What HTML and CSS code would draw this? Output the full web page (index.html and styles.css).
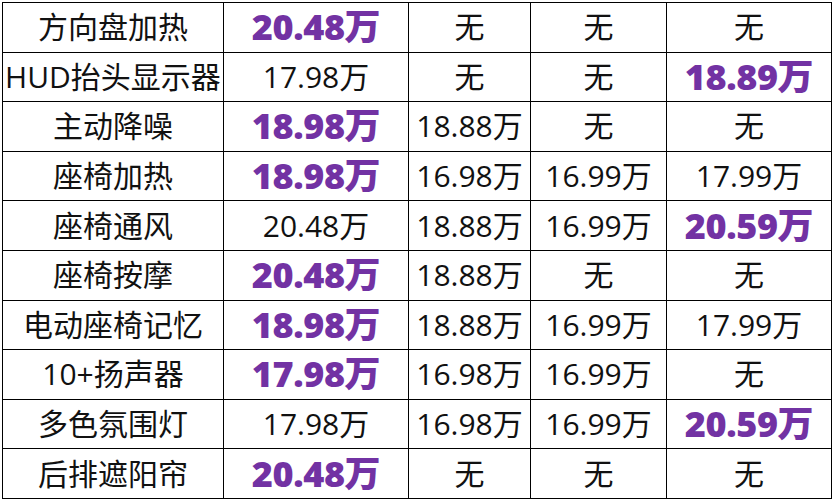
FILE: index.html
```html
<!DOCTYPE html>
<html lang="zh">
<head>
<meta charset="utf-8">
<link rel="stylesheet" href="styles.css">
</head>
<body>
<table class="grid">
<colgroup>
<col class="c1"><col class="c2"><col class="c3"><col class="c4"><col class="c5">
</colgroup>
<tbody>
<tr><td>方向盘加热</td><td class="hi">20.48万</td><td>无</td><td>无</td><td>无</td></tr>
<tr><td>HUD抬头显示器</td><td>17.98万</td><td>无</td><td>无</td><td class="hi">18.89万</td></tr>
<tr><td>主动降噪</td><td class="hi">18.98万</td><td>18.88万</td><td>无</td><td>无</td></tr>
<tr><td>座椅加热</td><td class="hi">18.98万</td><td>16.98万</td><td>16.99万</td><td>17.99万</td></tr>
<tr><td>座椅通风</td><td>20.48万</td><td>18.88万</td><td>16.99万</td><td class="hi">20.59万</td></tr>
<tr><td>座椅按摩</td><td class="hi">20.48万</td><td>18.88万</td><td>无</td><td>无</td></tr>
<tr><td>电动座椅记忆</td><td class="hi">18.98万</td><td>18.88万</td><td>16.99万</td><td>17.99万</td></tr>
<tr><td>10+扬声器</td><td class="hi">17.98万</td><td>16.98万</td><td>16.99万</td><td>无</td></tr>
<tr><td>多色氛围灯</td><td>17.98万</td><td>16.98万</td><td>16.99万</td><td class="hi">20.59万</td></tr>
<tr><td>后排遮阳帘</td><td class="hi">20.48万</td><td>无</td><td>无</td><td>无</td></tr>
</tbody>
</table>
</body>
</html>
```
FILE: styles.css
```css
html, body {
  margin: 0;
  padding: 0;
  background: #ffffff;
}
body {
  padding: 2px 0 0 2px;
}
.grid {
  border-collapse: collapse;
  table-layout: fixed;
  width: 830px;
  font-family: "Open Sans", "Noto Sans CJK SC", sans-serif;
  font-size: 30px;
  color: #111111;
}
.c1 { width: 221px; }
.c2 { width: 185px; }
.c3 { width: 122px; }
.c4 { width: 136px; }
.c5 { width: 165px; }
.grid tr {
  height: 49.6px;
}
.grid td {
  border: 1.5px solid #000000;
  padding: 0;
  text-align: center;
  vertical-align: middle;
  white-space: nowrap;
  overflow: hidden;
  line-height: 1;
}
.grid td.hi {
  color: #7232a3;
  font-weight: 800;
  font-size: 36px;
  letter-spacing: -0.4px;
}
```
